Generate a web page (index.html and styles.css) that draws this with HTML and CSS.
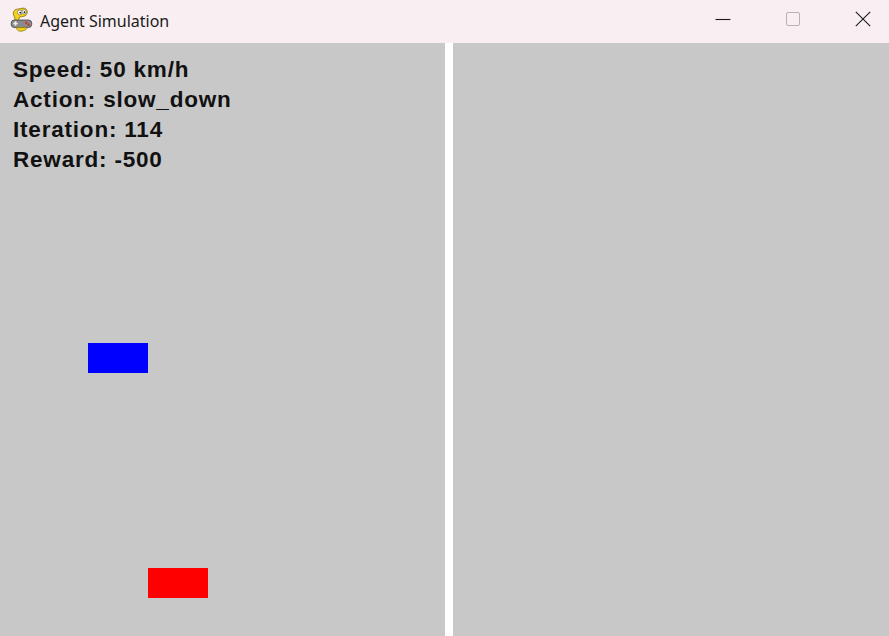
FILE: index.html
```html
<!DOCTYPE html>
<html>
<head>
<meta charset="utf-8">
<link rel="stylesheet" href="styles.css">
</head>
<body>
<div class="window">
  <div class="titlebar">
    <div class="title-left">
      <svg class="app-icon" width="24" height="26" viewBox="0 0 22 24">
        <path d="M7 2 C3 2 2 6 4 9 C5 11 4 13 5 15 L8 15 C7 13 8 11 9 9 C11 9 14 9 15 7 C17 4 15 1 12 1 C10 1 9 2 7 2 Z" fill="#f2d21b" stroke="#8a7410" stroke-width="0.8"/>
        <circle cx="9" cy="5" r="2.2" fill="#fff" stroke="#555" stroke-width="0.5"/>
        <circle cx="13" cy="4.5" r="2" fill="#fff" stroke="#555" stroke-width="0.5"/>
        <circle cx="9.5" cy="5.2" r="0.9" fill="#222"/>
        <circle cx="13.3" cy="4.8" r="0.8" fill="#222"/>
        <rect x="1" y="12" width="19" height="7" rx="3" fill="#8a8a8a" stroke="#444" stroke-width="0.7"/>
        <rect x="3" y="14.5" width="4" height="1.5" fill="#eee"/>
        <rect x="4.25" y="13.2" width="1.5" height="4" fill="#eee"/>
        <circle cx="15" cy="14.5" r="1.1" fill="#c33"/>
        <circle cx="17" cy="16.3" r="1.1" fill="#c33"/>
        <path d="M6 19 C6 22 9 23 12 22 C15 21 16 20 15 19 Z" fill="#f2d21b" stroke="#8a7410" stroke-width="0.7"/>
      </svg>
      <span class="title-text">Agent Simulation</span>
    </div>
    <div class="controls">
      <div class="ctl">
        <svg width="16" height="16" viewBox="0 0 16 16"><path d="M0.5 8.5 H15.5" stroke="#1a1a1a" stroke-width="1.1"/></svg>
      </div>
      <div class="ctl">
        <svg width="16" height="16" viewBox="0 0 16 16"><rect x="1.5" y="1.5" width="13" height="13" rx="1.5" fill="none" stroke="#b8b4b6" stroke-width="1"/></svg>
      </div>
      <div class="ctl">
        <svg width="16" height="16" viewBox="0 0 16 16"><path d="M0.8 0.8 L15.2 15.2 M15.2 0.8 L0.8 15.2" stroke="#1a1a1a" stroke-width="1.1"/></svg>
      </div>
    </div>
  </div>
  <div class="content">
    <div class="panel left">
      <div class="stats">
        <div class="line">Speed: 50 km/h</div>
        <div class="line">Action: slow_down</div>
        <div class="line">Iteration: 114</div>
        <div class="line">Reward: -500</div>
      </div>
      <div class="car agent"></div>
      <div class="car other"></div>
    </div>
    <div class="divider"></div>
    <div class="panel right"></div>
  </div>
</div>
</body>
</html>
```

FILE: styles.css
```css
html, body {
  margin: 0;
  padding: 0;
  width: 889px;
  height: 636px;
  overflow: hidden;
  background: #ffffff;
}
.window {
  display: flex;
  flex-direction: column;
  width: 889px;
  height: 636px;
}
.titlebar {
  height: 43px;
  flex: 0 0 43px;
  background: #f9eff3;
  display: flex;
  align-items: center;
  justify-content: space-between;
}
.title-left {
  display: flex;
  align-items: center;
  padding-left: 10px;
}
.app-icon {
  display: block;
  margin-top: -4px;
}
.title-text {
  font-family: "Noto Sans", "Open Sans", sans-serif;
  font-size: 16px;
  color: #1a1a1a;
  margin-left: 6px;
  margin-top: -2px;
}
.controls {
  display: flex;
  gap: 20px;
  height: 100%;
  padding-right: 1px;
  margin-top: -5px;
}
.ctl {
  width: 50px;
  height: 100%;
  display: flex;
  align-items: center;
  justify-content: center;
}
.content {
  flex: 1;
  display: flex;
}
.panel {
  background: #c8c8c8;
  position: relative;
}
.left {
  width: 445px;
  flex: 0 0 445px;
}
.divider {
  width: 8px;
  flex: 0 0 8px;
  background: #ffffff;
}
.right {
  flex: 1;
}
.stats {
  padding: 12px 0 0 13px;
  font-family: "Liberation Sans", Arial, sans-serif;
  font-weight: bold;
  font-size: 22.5px;
  letter-spacing: 0.8px;
  color: #111;
}
.line {
  height: 30px;
  line-height: 29px;
}
.car {
  position: absolute;
  width: 60px;
  height: 30px;
}
.agent {
  left: 88px;
  top: 300px;
  background: #0000ff;
}
.other {
  left: 148px;
  top: 525px;
  background: #ff0000;
}
```
